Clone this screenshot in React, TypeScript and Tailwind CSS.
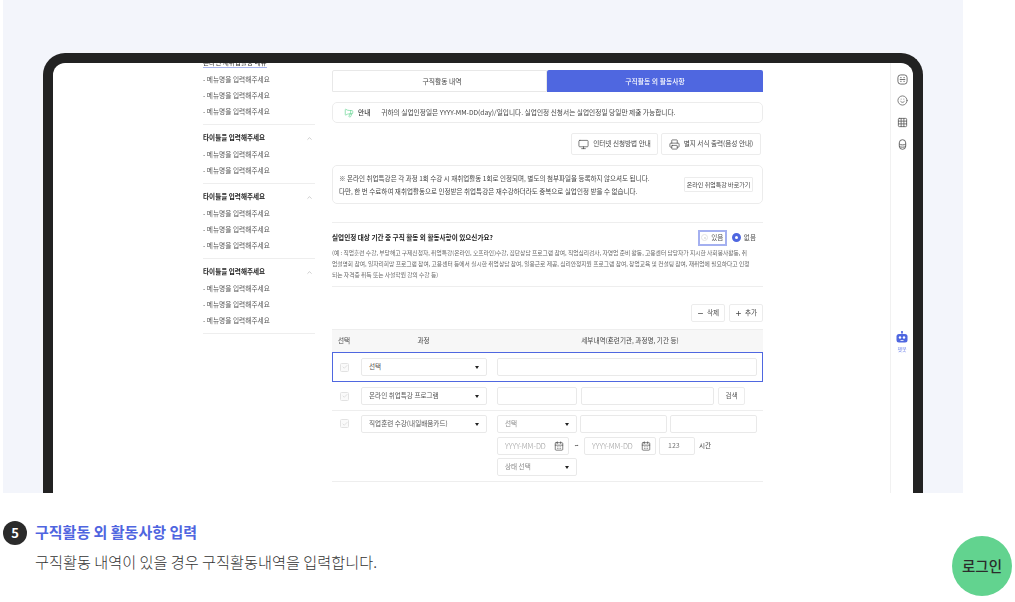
import React from "react";
import { ChevronUp, Monitor, Printer, CalendarDays, Check, Minus, Plus, Megaphone, Smile, Grid3x3 } from "lucide-react";

const font = { fontFamily: '"Noto Sans CJK KR", "Noto Sans", sans-serif' };

function MenuItem() {
  return <div className="h-4 flex items-center text-[6.7px] text-[#555]">- 메뉴명을 입력해주세요</div>;
}

function Section({ count }: { count: number }) {
  return (
    <div className="pt-[5px] pb-[5px] border-b border-[#eeeeee]">
      <div className="h-4 flex items-center justify-between text-[6.6px] font-bold text-[#222]">
        <span>타이틀을 입력해주세요</span>
        <ChevronUp size={7} className="mr-0.5 text-[#aaa]" />
      </div>
      {Array.from({ length: count }).map((_, i) => (
        <MenuItem key={i} />
      ))}
    </div>
  );
}

function Arrow() {
  return <span className="w-0 h-0 border-l-[2.5px] border-r-[2.5px] border-t-[3px] border-l-transparent border-r-transparent border-t-[#222]" />;
}

function Select({ label, w, gray }: { label: string; w: string; gray?: boolean }) {
  return (
    <div className={`${w} h-[18px] shrink-0 flex items-center justify-between pl-[7px] pr-[7px] border border-[#e9e9e9] rounded-[2px] bg-white text-[6.6px] ${gray ? "text-[#888]" : "text-[#555]"}`}>
      <span>{label}</span>
      <Arrow />
    </div>
  );
}

function Input({ w, children }: { w: string; children?: React.ReactNode }) {
  return (
    <div className={`${w} h-[18px] shrink-0 flex items-center pl-[7px] border border-[#e9e9e9] rounded-[2px] bg-white text-[7px] text-[#999]`}>
      {children}
    </div>
  );
}

function DateInput({ w }: { w: string }) {
  return (
    <div className={`${w} h-[18px] shrink-0 flex items-center justify-between pl-[7px] pr-[4px] border border-[#e9e9e9] rounded-[2px] text-[7.4px] font-light text-[#999]`}>
      <span>YYYY-MM-DD</span>
      <CalendarDays size={10} strokeWidth={1.6} className="text-[#444]" />
    </div>
  );
}

function Checkbox() {
  return (
    <div className="w-[9px] h-[9px] shrink-0 flex items-center justify-center border border-[#e2e2e2] rounded-[1.5px] bg-[#fafafa]">
      <Check size={6} className="text-[#c4c4c4]" />
    </div>
  );
}

export default function App() {
  return (
    <div className="relative w-[1015px] h-[602px] overflow-hidden bg-white" style={font}>
      <div className="ml-[3px] w-[960px] h-[493px] pt-[53px] px-10 bg-[#f3f5fb] overflow-hidden">
        <div className="h-[440px] border-x-[10px] border-t-[10px] border-[#222222] rounded-t-[22px] bg-white overflow-hidden">
          <div className="h-full flex blur-[0.3px]">
            {/* sidebar */}
            <aside className="ml-[150px] w-[112px] shrink-0 -mt-[8px]">
              <div className="pb-[5px] border-b border-[#eeeeee]">
                <div className="h-4 flex items-center text-[6.6px] text-[#333]">
                  <span className="border-b border-[#a9b6ef]">온라인 재취업활동 메뉴</span>
                </div>
                <MenuItem />
                <MenuItem />
                <MenuItem />
              </div>
              <Section count={2} />
              <Section count={3} />
              <Section count={3} />
            </aside>

            {/* main */}
            <main className="ml-[17px] w-[431px] shrink-0 pt-[7px]">
              <div className="flex h-[22px] text-[6.8px]">
                <div className="w-[215px] pl-[5px] flex items-center justify-center border border-[#e8e8e8] rounded-tl-[2px] text-[#444]">구직활동 내역</div>
                <div className="flex-1 flex items-center justify-center bg-[#4f67e0] rounded-t-[2px] text-white font-medium">구직활동 외 활동사항</div>
              </div>

              <div className="mt-[10px] h-[21px] flex items-center pl-[11px] border border-[#ececec] rounded-[5px] text-[6.7px] text-[#444]">
                <Megaphone size={10} strokeWidth={1.6} className="text-[#62d38f] -scale-x-100" />
                <span className="ml-[4px] font-medium text-[#333]">안내</span>
                <span className="ml-[11px]">귀하의 실업인정일은 YYYY-MM-DD(day)/일입니다. 실업인정 신청서는 실업인정일 당일만 제출 가능합니다.</span>
              </div>

              <div className="mt-[10px] flex justify-end gap-[3px] pr-0.5 text-[6.6px] text-[#444]">
                <div className="w-[87px] h-[22px] flex items-center justify-center gap-1 border border-[#ececec] rounded-[2px]">
                  <Monitor size={11} className="text-[#444]" strokeWidth={1.5} />
                  <span>인터넷 신청방법 안내</span>
                </div>
                <div className="w-[100px] h-[22px] flex items-center justify-center gap-1 border border-[#ececec] rounded-[2px]">
                  <Printer size={11} className="text-[#444]" strokeWidth={1.5} />
                  <span>별지 서식 출력(음성 안내)</span>
                </div>
              </div>

              <div className="mt-[10px] h-[39px] flex items-center justify-between pl-[6px] pr-[9px] border border-[#ececec] rounded-[5px] text-[6.55px] text-[#444]">
                <div className="leading-[12.5px]">
                  <div>※ 온라인 취업특강은 각 과정 1회 수강 시 재취업활동 1회로 인정되며, 별도의 첨부파일을 등록하지 않으셔도 됩니다.</div>
                  <div>다만, 한 번 수료하여 재취업활동으로 인정받은 취업특강은 재수강하더라도 중복으로 실업인정 받을 수 없습니다.</div>
                </div>
                <div className="w-[69px] h-[15px] shrink-0 flex items-center justify-center border border-[#ececec] rounded-[1px] text-[6px] text-[#444]">온라인 취업특강 바로가기</div>
              </div>

              <div className="mt-[18px] h-[65px] border-y border-[#eeeeee]">
                <div className="mt-[6px] flex items-center justify-between h-[17px]">
                  <span className="text-[6.6px] font-bold text-[#222]">실업인정 대상 기간 중 구직 활동 외 활동사항이 있으신가요?</span>
                  <div className="flex items-center mr-[7px] text-[6.6px] text-[#555]">
                    <div className="w-[29px] h-[16px] flex items-center justify-center gap-[3px] border-2 border-[#a4b0f0]">
                      <span className="w-[7px] h-[7px] rounded-full border border-[#e2e2e2] flex items-center justify-center">
                        <span className="w-[2px] h-[2px] rounded-full bg-[#ddd]" />
                      </span>
                      <span>있음</span>
                    </div>
                    <span className="ml-[5px] w-[9px] h-[9px] rounded-full border-[3px] border-[#4f67e0] bg-white" />
                    <span className="ml-[3px]">없음</span>
                  </div>
                </div>
                <div className="mt-[1px] text-[5.75px] leading-[11px] text-[#666] whitespace-nowrap">
                  <div>(예 : 직업훈련 수강, 부당해고 구제신청자, 취업특강(온라인, 오프라인)수강, 집단상담 프로그램 참여, 직업심리검사, 자영업 준비 활동, 고용센터 담당자가 지시한 사회봉사활동, 취</div>
                  <div>업설명회 참여, 일자리희망 프로그램 참여, 고용센터 등에서 실시한 취업상담 참여, 일용근로 제공, 심리안정지원 프로그램 참여, 창업교육 및 컨설팅 참여, 재취업에 필요하다고 인정</div>
                  <div>되는 자격증 취득 또는 사설학원 강의 수강 등)</div>
                </div>
              </div>

              <div className="mt-[17px] flex justify-end gap-1 text-[6.6px] text-[#444]">
                <div className="w-[34px] h-[18px] flex items-center justify-center gap-[3px] border border-[#ececec] rounded-[2px]">
                  <Minus size={7} strokeWidth={2.5} />
                  <span>삭제</span>
                </div>
                <div className="w-[34px] h-[18px] flex items-center justify-center gap-[3px] border border-[#ececec] rounded-[2px]">
                  <Plus size={7} strokeWidth={2.5} />
                  <span>추가</span>
                </div>
              </div>

              <div className="mt-[7px] h-[23px] flex items-center bg-[#f7f7f7] border-t border-[#eeeeee] text-[6.6px] text-[#444]">
                <span className="w-[24px] text-center">선택</span>
                <span className="w-[135px] text-center">과정</span>
                <span className="flex-1 pl-[6px] text-center">세부내역(훈련기관, 과정명, 기간 등)</span>
              </div>

              <div className="h-[30px] flex items-center pl-[7px] border border-[#4f67e0]">
                <Checkbox />
                <div className="ml-[12px]"><Select label="선택" w="w-[126px]" /></div>
                <div className="ml-[10px]"><Input w="w-[260px]" /></div>
              </div>

              <div className="pt-[5px] pb-[5px] pl-2 flex items-center border-b border-[#eeeeee]">
                <Checkbox />
                <div className="ml-[12px]"><Select label="온라인 취업특강 프로그램" w="w-[126px]" /></div>
                <div className="ml-[10px] flex gap-1">
                  <Input w="w-[80px]" />
                  <Input w="w-[133px]" />
                  <div className="w-[27px] h-[18px] flex items-center justify-center border border-[#ececec] rounded-[2px] text-[6.6px] text-[#555]">검색</div>
                </div>
              </div>

              <div className="pt-[4px] pb-[5px] pl-2 flex items-start border-b border-[#eeeeee]">
                <div className="pt-1"><Checkbox /></div>
                <div className="ml-[12px]"><Select label="직업훈련 수강(내일배움카드)" w="w-[126px]" /></div>
                <div className="ml-[10px] flex flex-col gap-[3.5px]">
                  <div className="flex gap-[3px]">
                    <Select label="선택" w="w-[80px]" gray />
                    <Input w="w-[87px]" />
                    <Input w="w-[87px]" />
                  </div>
                  <div className="flex items-center">
                    <DateInput w="w-[72px]" />
                    <span className="w-[15px] text-center text-[7px] font-bold text-[#444]">~</span>
                    <DateInput w="w-[72px]" />
                    <div className="ml-[3px]"><Input w="w-[36px]"><span className="text-[#777] ml-[1px]">123</span></Input></div>
                    <span className="ml-[4px] text-[6.6px] text-[#444]">시간</span>
                  </div>
                  <Select label="상태 선택" w="w-[80px]" gray />
                </div>
              </div>
            </main>

            {/* right rail */}
            <div className="ml-[127px] flex-1 border-l border-[#f1f1f1] flex flex-col items-center pt-[10px]">
              <svg width="11" height="11" viewBox="0 0 24 24" fill="none" stroke="#555" strokeWidth="1.8" className="mt-[0.5px]">
                <rect x="2" y="2" width="20" height="20" rx="6" />
                <path d="M7 8h3M14 8h3M7 16h3M14 16h3M6 12h12" />
              </svg>
              <Smile size={11} strokeWidth={1.6} className="mt-[10.5px] text-[#555]" />
              <Grid3x3 size={11} strokeWidth={1.7} className="mt-[11px] text-[#555]" />
              <svg width="11" height="11" viewBox="0 0 24 24" fill="none" stroke="#555" strokeWidth="1.9" className="mt-[11px]">
                <rect x="5" y="1.5" width="14" height="21" rx="7" />
                <path d="M5 11c2 2.5 12 2.5 14 0M5 16c2 2.5 12 2.5 14 0" />
              </svg>
              <svg width="12" height="13" viewBox="0 0 24 26" className="mt-[181px]">
                <path d="M12 0.5v5" stroke="#4f67e0" strokeWidth="2.5" />
                <circle cx="12" cy="2" r="1.8" fill="#4f67e0" />
                <rect x="1" y="6" width="22" height="17" rx="5" fill="#4f67e0" />
                <circle cx="8" cy="13" r="2.4" fill="#fff" />
                <circle cx="16" cy="13" r="2.4" fill="#fff" />
                <rect x="9" y="18" width="6" height="1.6" fill="#fff" />
              </svg>
              <span className="mt-[1px] text-[5px] text-[#6f83ea]">챗봇</span>
            </div>
          </div>
        </div>
      </div>

      {/* caption */}
      <div className="mt-[28px] ml-[3px] flex items-center h-6">
        <span className="w-6 h-6 rounded-full bg-[#2b2b2b] flex items-center justify-center text-white text-[13px] font-bold">5</span>
        <span className="ml-2 -mt-[1px] text-[15px] font-bold text-[#4f65e0]">구직활동 외 활동사항 입력</span>
      </div>
      <div className="mt-[2px] ml-[35px] text-[15.2px] leading-[28px] font-light text-[#333]">구직활동 내역이 있을 경우 구직활동내역을 입력합니다.</div>

      {/* floating login */}
      <div className="absolute left-[952px] top-[536px] w-[60px] h-[60px] rounded-full bg-[#62d38f] flex items-center justify-center text-[14.5px] font-medium text-[#2b2b2b]">로그인</div>
    </div>
  );
}
